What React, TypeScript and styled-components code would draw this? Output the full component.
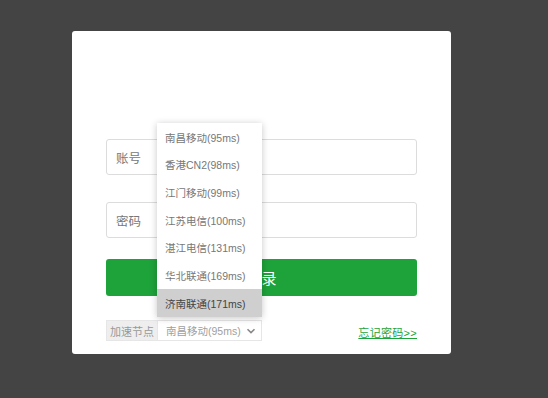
import styled, { createGlobalStyle } from "styled-components";

const GlobalStyle = createGlobalStyle`
  html, body {
    margin: 0;
    padding: 0;
    background: #444444;
    font-family: "Liberation Sans", "Noto Sans CJK SC", sans-serif;
  }
`;

const nodes = [
  "南昌移动(95ms)",
  "香港CN2(98ms)",
  "江门移动(99ms)",
  "江苏电信(100ms)",
  "湛江电信(131ms)",
  "华北联通(169ms)",
  "济南联通(171ms)",
];

const green = "#1ea23a";

const Page = styled.div`
  width: 548px;
  height: 398px;
  padding: 31px 0 0 72px;
  box-sizing: border-box;
`;

const Card = styled.div`
  width: 379px;
  height: 323px;
  background: #fff;
  border-radius: 3px;
  box-sizing: border-box;
  padding: 108px 34px 0 34px;
  display: flex;
  flex-direction: column;
`;

const Field = styled.label<{ $gap: number }>`
  display: flex;
  align-items: center;
  height: 36px;
  box-sizing: border-box;
  border: 1px solid #dcdcdc;
  border-radius: 3px;
  padding: 0 9px;
  margin-bottom: ${(p) => p.$gap}px;
  font-size: 12.5px;
  color: #777;
`;

const Input = styled.input`
  flex: 1;
  border: none;
  outline: none;
  margin-left: 20px;
  background: transparent;
`;

const LoginButton = styled.button`
  height: 37px;
  border: none;
  border-radius: 3px;
  background: ${green};
  color: #fff;
  font-size: 15px;
  font-family: inherit;
  margin-bottom: 24px;
`;

const BottomRow = styled.div`
  position: relative;
  display: flex;
  align-items: center;
  height: 21px;
`;

const NodeLabel = styled.span`
  height: 21px;
  width: 51px;
  box-sizing: border-box;
  display: flex;
  align-items: center;
  justify-content: center;
  background: #eeeeee;
  border: 1px solid #e6e6e6;
  border-right: none;
  font-size: 11px;
  color: #999;
  white-space: nowrap;
`;

const SelectBox = styled.div`
  height: 21px;
  width: 105px;
  box-sizing: border-box;
  display: flex;
  align-items: center;
  justify-content: space-between;
  padding: 0 5px 0 8px;
  border: 1px solid #e6e6e6;
  font-size: 10.5px;
  color: #a0a0a0;
  white-space: nowrap;
`;

const ForgotLink = styled.a`
  margin-left: auto;
  margin-top: 3px;
  font-size: 11px;
  color: ${green};
  text-decoration: underline;
  letter-spacing: 0.3px;
`;

const DropList = styled.ul`
  position: absolute;
  left: 51px;
  bottom: calc(100% + 3px);
  width: 105px;
  margin: 0;
  padding: 0;
  list-style: none;
  background: #fff;
  box-shadow: 0 1px 7px rgba(0, 0, 0, 0.22);
`;

const DropItem = styled.li<{ $active?: boolean }>`
  height: 27.7px;
  display: flex;
  align-items: center;
  padding-left: 8px;
  font-size: 10.5px;
  white-space: nowrap;
  color: ${(p) => (p.$active ? "#444" : "#777")};
  background: ${(p) => (p.$active ? "#cfcfcf" : "transparent")};
`;

const Chevron = () => (
  <svg width="10" height="10" viewBox="0 0 10 10">
    <path d="M1.5 3.2 L5 6.6 L8.5 3.2" fill="none" stroke="#888" strokeWidth="1.6" />
  </svg>
);

export default function App() {
  return (
    <>
      <GlobalStyle />
      <Page>
        <Card>
          <Field $gap={27}>
            账号
            <Input />
          </Field>
          <Field $gap={21}>
            密码
            <Input type="password" />
          </Field>
          <LoginButton>登录</LoginButton>
          <BottomRow>
            <NodeLabel>加速节点</NodeLabel>
            <SelectBox>
              南昌移动(95ms)
              <Chevron />
            </SelectBox>
            <ForgotLink>忘记密码&gt;&gt;</ForgotLink>
            <DropList>
              {nodes.map((n, i) => (
                <DropItem key={n} $active={i === nodes.length - 1}>
                  {n}
                </DropItem>
              ))}
            </DropList>
          </BottomRow>
        </Card>
      </Page>
    </>
  );
}
